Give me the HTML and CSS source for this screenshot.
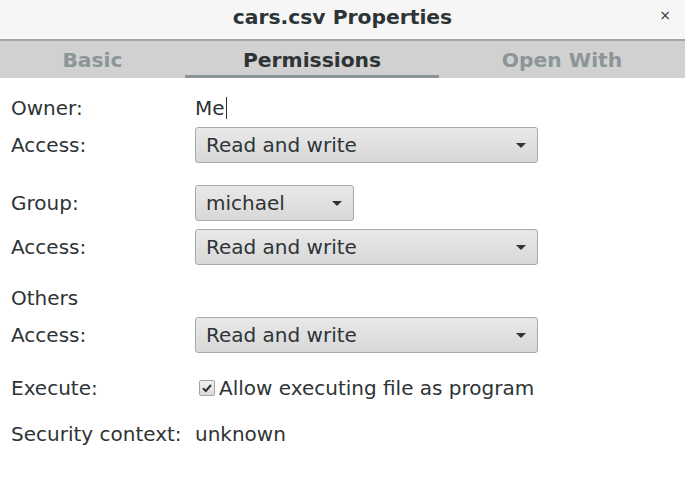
FILE: index.html
```html
<!DOCTYPE html>
<html>
<head>
<meta charset="utf-8">
<link rel="stylesheet" href="styles.css">
</head>
<body>
<div class="window">
  <header class="titlebar">
    <span class="title">cars.csv Properties</span>
    <span class="close">×</span>
  </header>
  <nav class="tabs">
    <div class="tab tab-basic">Basic</div>
    <div class="tab tab-perm active">Permissions</div>
    <div class="tab tab-open">Open With</div>
  </nav>
  <main class="content">
    <div class="row r-owner">
      <span class="label">Owner:</span>
      <span class="value">Me<span class="caret"></span></span>
    </div>
    <div class="row r-tight">
      <span class="label">Access:</span>
      <div class="combo wide"><span>Read and write</span><span class="arrow"></span></div>
    </div>
    <div class="row r-group">
      <span class="label">Group:</span>
      <div class="combo narrow"><span>michael</span><span class="arrow"></span></div>
    </div>
    <div class="row r-mid">
      <span class="label">Access:</span>
      <div class="combo wide"><span>Read and write</span><span class="arrow"></span></div>
    </div>
    <div class="row r-others">
      <span class="label">Others</span>
    </div>
    <div class="row r-tight">
      <span class="label">Access:</span>
      <div class="combo wide"><span>Read and write</span><span class="arrow"></span></div>
    </div>
    <div class="row r-exec">
      <span class="label">Execute:</span>
      <label class="check"><span class="box"><svg width="12" height="12" viewBox="0 0 12 12"><path d="M2 6.2 L4.8 9 L10 3" fill="none" stroke="#2e3436" stroke-width="2"/></svg></span>Allow executing file as program</label>
    </div>
    <div class="row r-sec">
      <span class="label">Security context:</span>
      <span class="value">unknown</span>
    </div>
  </main>
</div>
</body>
</html>
```
FILE: styles.css
```css
html, body {
  margin: 0;
  padding: 0;
  background: #ffffff;
}
body {
  font-family: "DejaVu Sans", sans-serif;
  color: #2e3436;
  width: 685px;
  height: 490px;
  overflow: hidden;
}
.window {
  display: flex;
  flex-direction: column;
}
.titlebar {
  height: 39px;
  box-sizing: border-box;
  padding-bottom: 6px;
  background: #f6f6f6;
  display: flex;
  align-items: center;
  justify-content: center;
  position: relative;
}
.title {
  font-weight: bold;
  font-size: 20.3px;
  color: #2e3436;
}
.close {
  position: absolute;
  right: 14px;
  top: 7px;
  font-size: 14px;
  color: #2e3436;
}
.tabs {
  display: flex;
  height: 37px;
  background: #d1d1d1;
  border-top: 2px solid #a2a6a7;
}
.tab {
  display: flex;
  align-items: center;
  justify-content: center;
  font-weight: bold;
  font-size: 20.3px;
  color: #8c9597;
  box-sizing: border-box;
  padding-top: 1px;
}
.tab-basic { width: 185px; }
.tab-perm { width: 254px; }
.tab-open { flex: 1; }
.tab.active {
  color: #2e3436;
  border-bottom: 3px solid #8b9598;
  padding-top: 4px;
}
.content {
  padding: 12px 0 0 11px;
  font-size: 20px;
  display: flex;
  flex-direction: column;
}
.row {
  display: grid;
  grid-template-columns: 184px auto;
  align-items: center;
  height: 36px;
}
.r-owner { margin-top: 0; }
.r-tight { margin-top: 1px; }
.r-group { margin-top: 22px; }
.r-mid { margin-top: 8px; }
.r-others { margin-top: 15px; }
.r-exec { margin-top: 17px; }
.r-sec { margin-top: 10px; }
.value {
  display: inline-flex;
  align-items: center;
}
.caret {
  display: inline-block;
  width: 1px;
  height: 22px;
  background: #2e3436;
  margin-left: 1px;
}
.combo {
  box-sizing: border-box;
  height: 36px;
  border: 1px solid #a9a9a9;
  border-radius: 3px;
  background: linear-gradient(#e9e9e9, #d8d8d8);
  display: flex;
  align-items: center;
  justify-content: space-between;
  padding: 0 11px 0 10px;
  box-shadow: 0 1px 0 rgba(255,255,255,0.8);
}
.combo.wide { width: 343px; }
.combo.narrow { width: 159px; }
.arrow {
  width: 0;
  height: 0;
  border-left: 5px solid transparent;
  border-right: 5px solid transparent;
  border-top: 5px solid #2e3436;
}
.check {
  display: flex;
  align-items: center;
  margin-left: 4px;
}
.box {
  box-sizing: border-box;
  width: 16px;
  height: 16px;
  border: 1px solid #a3a3a3;
  border-radius: 2px;
  background: linear-gradient(#f0f0f0, #dcdcdc);
  display: flex;
  align-items: center;
  justify-content: center;
  margin-right: 4px;
}
```
